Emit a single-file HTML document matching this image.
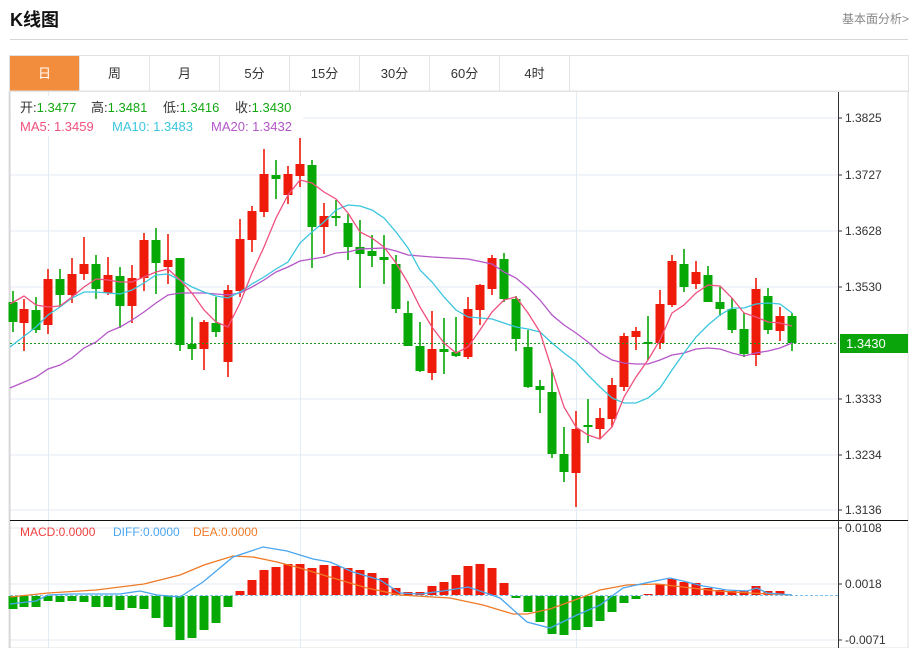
<!DOCTYPE html>
<html><head><meta charset="utf-8"><style>
body{margin:0;width:913px;height:648px;overflow:hidden;background:#fff;font-family:"Liberation Sans","Noto Sans CJK SC",sans-serif;}
.t{position:absolute;left:10px;top:6px;font-size:18px;font-weight:bold;color:#111;}
.r{position:absolute;right:4px;top:10px;font-size:12px;color:#888;}
.hr{position:absolute;left:10px;top:39px;width:898px;height:1px;background:#d6d6d6;}
.tabs{position:absolute;left:9px;top:55px;width:898px;height:35px;border:1px solid #e2e2e2;border-bottom:1px solid #e6e6e6;}
.tab{position:absolute;top:0;height:35px;width:70px;line-height:35px;text-align:center;font-size:13px;color:#333;border-right:1px solid #e4e4e4;box-sizing:border-box;}
.tab.on{background:#f38d3e;color:#fff;}
</style></head><body>
<div class="t">K线图</div>
<div class="r">基本面分析&gt;</div>
<div class="hr"></div>
<div class="tabs">
<div class="tab on" style="left:0">日</div>
<div class="tab" style="left:70px">周</div>
<div class="tab" style="left:140px">月</div>
<div class="tab" style="left:210px">5分</div>
<div class="tab" style="left:280px">15分</div>
<div class="tab" style="left:350px">30分</div>
<div class="tab" style="left:420px">60分</div>
<div class="tab" style="left:490px">4时</div>
</div>
<svg id="c" style="position:absolute;left:0;top:0" width="913" height="648" font-family="Liberation Sans, Noto Sans CJK SC, sans-serif">
<rect x="9" y="91" width="899" height="557" fill="none" stroke="#e2e2e2"/>
<g stroke="#e3ebf3" stroke-width="1">
<line x1="10" x2="838" y1="118" y2="118"/><line x1="10" x2="838" y1="175" y2="175"/><line x1="10" x2="838" y1="231" y2="231"/><line x1="10" x2="838" y1="287" y2="287"/><line x1="10" x2="838" y1="399" y2="399"/><line x1="10" x2="838" y1="455" y2="455"/><line x1="10" x2="838" y1="510" y2="510"/>
<line x1="10" x2="838" y1="528" y2="528"/><line x1="10" x2="838" y1="584" y2="584"/><line x1="10" x2="838" y1="640" y2="640"/>
<line x1="48.5" x2="48.5" y1="92" y2="648"/><line x1="300.5" x2="300.5" y1="92" y2="648"/><line x1="576.5" x2="576.5" y1="92" y2="648"/>
</g>
<line x1="10" x2="10" y1="92" y2="648" stroke="#ccc"/>
<rect x="11" y="96" width="292" height="40" fill="#fff"/>
<g id="cd"></g>
<g id="mc"></g>
<line x1="10" x2="838" y1="343.5" y2="343.5" stroke="#1a9a1a" stroke-dasharray="2,2"/>
<line x1="10" x2="908" y1="520.5" y2="520.5" stroke="#111"/>
<line x1="838.5" x2="838.5" y1="92" y2="648" stroke="#333"/>
<g stroke="#333"><line x1="838" x2="842" y1="118" y2="118"/><line x1="838" x2="842" y1="175" y2="175"/><line x1="838" x2="842" y1="231" y2="231"/><line x1="838" x2="842" y1="287" y2="287"/><line x1="838" x2="842" y1="399" y2="399"/><line x1="838" x2="842" y1="455" y2="455"/><line x1="838" x2="842" y1="510" y2="510"/><line x1="838" x2="842" y1="528" y2="528"/><line x1="838" x2="842" y1="584" y2="584"/><line x1="838" x2="842" y1="640" y2="640"/></g>
<g font-size="12" fill="#333">
<text x="845" y="122">1.3825</text><text x="845" y="179">1.3727</text><text x="845" y="235">1.3628</text><text x="845" y="291">1.3530</text><text x="845" y="403">1.3333</text><text x="845" y="459">1.3234</text><text x="845" y="514">1.3136</text>
<text x="845" y="532">0.0108</text><text x="845" y="588">0.0018</text><text x="845" y="644">-0.0071</text>
</g>
<rect x="840" y="334" width="68" height="19" fill="#0aa50a"/>
<text x="846" y="348" font-size="13" fill="#fff">1.3430</text>
<g font-size="13">
<text x="20" y="112" fill="#333">开:<tspan fill="#13a813">1.3477</tspan></text>
<text x="91" y="112" fill="#333">高:<tspan fill="#13a813">1.3481</tspan></text>
<text x="163" y="112" fill="#333">低:<tspan fill="#13a813">1.3416</tspan></text>
<text x="235" y="112" fill="#333">收:<tspan fill="#13a813">1.3430</tspan></text>
<text x="20" y="131" fill="#f0507e">MA5: 1.3459</text>
<text x="112" y="131" fill="#3ac6de">MA10: 1.3483</text>
<text x="211" y="131" fill="#b456c8">MA20: 1.3432</text>
<text x="20" y="536" font-size="12" fill="#f04040">MACD:0.0000</text>
<text x="113" y="536" font-size="12" fill="#4aa6ef">DIFF:0.0000</text>
<text x="193" y="536" font-size="12" fill="#f07a25">DEA:0.0000</text>
</g>
<polyline id="ma20" fill="none" stroke="#b456c8" stroke-width="1.3"/>
<polyline id="ma10" fill="none" stroke="#3ac6de" stroke-width="1.3"/>
<polyline id="ma5" fill="none" stroke="#f0507e" stroke-width="1.3"/>
<polyline id="dea" fill="none" stroke="#f07a25" stroke-width="1.3"/>
<polyline id="dif" fill="none" stroke="#4aa6ef" stroke-width="1.3"/>
</svg>
<script>
var R="#ee1a0a",G="#06a806";
var c=[[13,'g',302,322,291,332],[24,'r',309,323,299,351],[36,'g',310,330,297,333],[48,'r',279,325,269,334],[60,'g',279,295,269,307],[72,'r',274,295,258,303],[84,'r',264,274,237,280],[96,'g',264,289,255,299],[108,'r',275,293,257,295],[120,'g',276,306,267,328],[132,'r',278,306,265,323],[144,'r',240,278,233,291],[156,'g',240,263,228,294],[168,'r',260,267,234,284],[180,'g',258,345,258,351],[192,'g',344,349,317,360],[204,'r',322,349,320,370],[216,'g',323,332,297,337],[228,'r',290,362,285,377],[240,'r',239,291,219,297],[252,'r',211,240,206,252],[264,'r',174,212,149,217],[276,'g',175,179,160,199],[288,'r',174,195,166,204],[300,'r',164,176,138,187],[312,'g',165,227,160,268],[324,'r',216,227,203,254],[336,'g',216,218,200,226],[348,'g',223,247,214,260],[360,'g',247,254,220,288],[372,'g',251,256,235,267],[384,'g',257,260,235,284],[396,'g',264,309,255,313],[408,'g',313,346,301,346],[420,'g',346,371,322,372],[432,'r',349,373,311,380],[444,'g',349,352,318,374],[456,'g',352,356,317,357],[468,'r',309,357,297,359],[480,'r',285,310,284,325],[492,'r',258,289,255,295],[504,'g',259,299,253,302],[516,'g',299,339,296,351],[528,'g',347,387,330,388],[540,'g',386,390,380,413],[552,'g',392,454,369,458],[564,'g',454,472,427,482],[576,'r',429,473,411,507],[588,'g',425,427,399,443],[600,'r',418,429,408,438],[612,'r',385,419,378,427],[624,'r',336,387,333,391],[636,'r',331,337,327,350],[648,'g',342,343,316,360],[660,'r',304,343,290,349],[672,'r',261,305,255,307],[684,'g',264,287,249,292],[696,'r',272,284,261,289],[708,'g',275,302,266,302],[720,'g',302,309,287,316],[732,'g',309,330,298,333],[744,'g',329,354,313,357],[756,'r',289,355,278,366],[768,'g',296,330,288,334],[780,'r',316,331,307,341],[792,'g',316,343,313,351]];
var s="";c.forEach(function(k){var col=k[1]=='r'?R:G;s+='<line x1="'+k[0]+'" x2="'+k[0]+'" y1="'+k[4]+'" y2="'+k[5]+'" stroke="'+col+'" stroke-width="1.6"/><rect x="'+(k[0]-4.5)+'" y="'+k[2]+'" width="9" height="'+Math.max(2,k[3]-k[2])+'" fill="'+col+'"/>';});
document.getElementById('cd').innerHTML=s;
var m=[-13,-11,-11,-5,-6,-5,-6,-11,-11,-14,-12,-13,-22,-31,-44,-42,-34,-27,-11,4,15,25,28,31,31,27,30,29,27,25,22,17,7,3,3,9,13,20,29,31,27,12,-2,-16,-26,-38,-39,-34,-31,-25,-16,-7,-3,1,11,16,13,12,7,5,4,4,9,4,4,0];
s='<line x1="10" x2="838" y1="595.5" y2="595.5" stroke="#7cc4ef" stroke-dasharray="3,2"/>';m.forEach(function(v,i){if(!v)return;var x=c[i][0];s+='<rect x="'+(x-4.5)+'" y="'+(v>0?595-v:596)+'" width="9" height="'+Math.abs(v)+'" fill="'+(v>0?R:G)+'"/>';});
document.getElementById('mc').innerHTML=s;
function P(id,p){document.getElementById(id).setAttribute('points',p);}
P('ma5',"10,304 24,296 36,305 48,307 60,306 72,297 84,287 96,279 108,280 120,282 132,282 144,277 156,272 168,269 180,280 192,293 204,310 216,322 228,327 240,303 252,273 264,247 276,218 288,195 300,180 312,183 324,192 336,199 348,213 360,232 372,238 384,247 396,263 408,283 420,307 432,327 444,343 456,353 468,347 480,330 492,312 504,300 516,297 528,313 540,332 552,370 564,407 576,427 588,435 600,439 612,427 624,397 636,377 648,360 660,340 672,313 684,305 696,293 708,285 720,286 732,298 744,313 756,317 768,322 780,323 792,326");
P('ma10',"10,347 36,327 48,315 60,307 72,298 84,292 96,292 120,294 132,290 144,283 156,275 168,274 180,280 192,287 204,292 216,296 228,298 240,292 252,284 264,277 276,269 288,262 300,243 312,232 324,222 336,210 348,205 360,206 372,210 384,218 396,232 408,248 420,270 432,282 444,297 456,310 468,317 480,318 492,319 504,323 516,327 528,329 540,332 552,343 564,353 576,362 588,375 600,387 612,398 624,403 636,403 648,398 660,388 672,370 684,353 696,337 708,325 720,315 732,308 744,308 756,304 768,303 780,304 792,313");
P('ma20',"10,388 36,377 48,369 60,365 72,358 84,348 96,342 108,332 120,327 132,320 144,312 156,303 168,295 180,293 204,293 228,295 240,293 252,287 264,280 276,272 288,267 300,261 312,259 324,257 336,253 348,252 360,249 384,248 396,251 408,255 432,257 450,258 468,259 492,264 504,272 516,278 528,288 540,300 552,315 564,325 576,333 588,342 600,353 612,360 624,363 636,364 648,364 660,360 672,355 684,353 696,349 708,348 720,349 732,353 744,356 756,353 768,351 780,348 792,343");
P('dea',"10,597 48,593 96,590 144,584 180,575 204,565 233,556 253,557 277,562 300,568 333,578 367,588 400,595 433,597 450,598 483,605 513,614 527,614 550,609 583,597 600,590 627,585 657,584 683,587 717,591 750,593 792,595");
P('dif',"10,604 36,601 48,595 72,594 120,594 140,591 157,595 180,597 203,582 233,557 263,547 287,551 313,559 330,562 353,572 380,580 400,593 420,594 443,591 468,587 483,592 500,598 527,622 550,628 577,615 600,605 623,588 650,582 670,578 683,581 703,586 727,590 747,591 757,588 767,593 792,595");
</script>
</body></html>
